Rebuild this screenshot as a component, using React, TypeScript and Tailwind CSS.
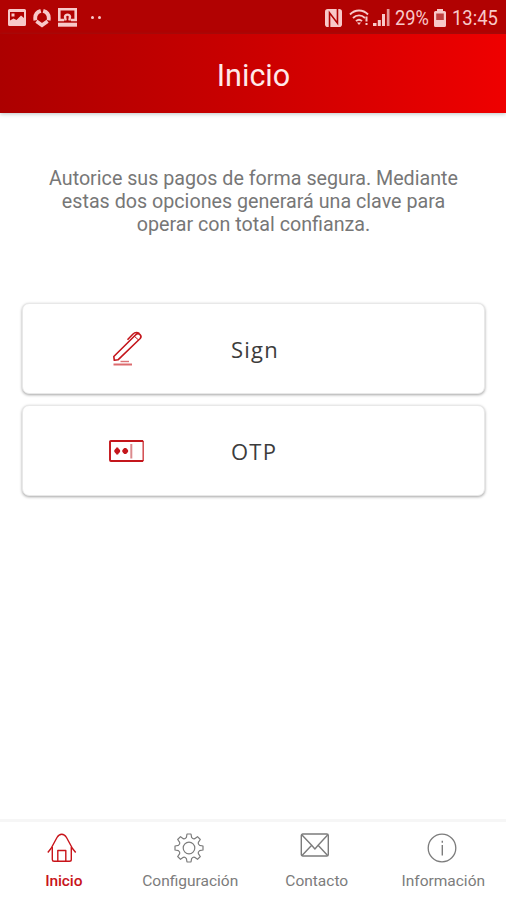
import React from 'react';
import clsx from 'clsx';

interface IconProps {
  className?: string;
}

const PictureIcon: React.FC<IconProps> = ({ className }) => (
  <svg viewBox="0 0 18 17" className={className} fill="currentColor">
    <path
      fillRule="evenodd"
      d="M1.500 0h15A1.500 1.500 0 0 1 18 1.500v14a1.500 1.500 0 0 1-1.500 1.500h-15A1.500 1.500 0 0 1 0 15.500v-14A1.500 1.500 0 0 1 1.500 0ZM2 3V11.500l3.500-2 3 1.500 4.500-4.500 3 2.500V3ZM3.500 4.500h3v3h-3Z"
    />
  </svg>
);

const RingIcon: React.FC<IconProps> = ({ className }) => (
  <svg viewBox="0 0 18 20" className={className} fill="none" stroke="currentColor" strokeWidth="3.800">
    <path d="M7.800 2.800C3.500 4 1.600 7.500 2.400 12.400" />
    <path d="M10.200 2.800c4.300 1.200 6.200 4.700 5.400 9.600" />
    <path d="M3.400 13.300 9 17.200l5.600-3.900" />
  </svg>
);

const BackupIcon: React.FC<IconProps> = ({ className }) => (
  <svg viewBox="0 0 19 19" className={className} fill="none" stroke="currentColor">
    <path d="M1.300 13V1.300h16.400V13" strokeWidth="2.600" />
    <path d="M0 12h6M13 12h6" strokeWidth="2.600" />
    <path d="M7.600 12.500 7 8.500a2.600 2.600 0 0 1 5 0l-.6 4" strokeWidth="2.400" />
    <path d="M0 16.700h19" strokeWidth="4" />
  </svg>
);

const NfcIcon: React.FC<IconProps> = ({ className }) => (
  <svg viewBox="0 0 18 19" className={className}>
    <rect width="18" height="19" rx="3" fill="currentColor" />
    <path d="M4.800 19V4l8.400 11V0" fill="none" stroke="#b00202" strokeWidth="1.700" />
  </svg>
);

const WifiIcon: React.FC<IconProps> = ({ className }) => (
  <svg viewBox="0 0 20 17" className={className} fill="none" stroke="currentColor" strokeWidth="1.900">
    <path d="M1 5.500C6 .2 14 .2 19 5.500" />
    <path d="M4 9c3.500-3.500 8.500-3.500 12 0" />
    <path d="M7 12.200c2-2 4-2 6 0" />
    <path d="m8 13.500 2 2.500 2-2.500Z" fill="currentColor" stroke="none" />
    <path d="M17.500 7.500v5M17.500 14v2" strokeWidth="2" />
  </svg>
);

const SignalIcon: React.FC<IconProps> = ({ className }) => (
  <svg viewBox="0 0 17 17" className={className} fill="currentColor">
    <path d="M0 17v-3h3.500v3ZM4.800 17v-6h3v6ZM9 17V5h3v12Z" />
    <path d="M13.800 17V0H16.500v17Z" opacity=".75" />
  </svg>
);

const BatteryIcon: React.FC<IconProps> = ({ className }) => (
  <svg viewBox="0 0 12 18" className={className}>
    <path
      d="M3 0h6v2h1.500A1.500 1.500 0 0 1 12 3.500v13a1.500 1.500 0 0 1-1.500 1.500h-9A1.500 1.500 0 0 1 0 16.500v-13A1.500 1.500 0 0 1 1.500 2H3Z"
      fill="currentColor"
    />
    <path d="M2.200 4.500h7.600v6.500H2.200Z" fill="#c04040" />
  </svg>
);

const PenIcon: React.FC<IconProps> = ({ className }) => (
  <svg viewBox="0 0 32 36" className={className} fill="none" stroke="#c4161c" strokeWidth="1.600" strokeLinejoin="round">
    <path d="M2.300 29.300 1.800 25.500 24 3.500c2.800-2.200 6.500 1.200 4.200 4L6 28.800Z" />
    <path d="m22.300 5.200 4.500 4" strokeWidth="1" />
    <path d="m15.500 8.800 5.300-5.600c1.500-1.500 4-2.300 6.500-.8" />
    <path d="M8.500 30.500H17" strokeWidth="1.400" stroke="#dc7276" />
    <path d="M1.500 33.500h18.500" strokeWidth="2" stroke="#dc6b6e" />
  </svg>
);

const OtpIcon: React.FC<IconProps> = ({ className }) => (
  <svg viewBox="0 0 36 22" className={className} fill="none" stroke="#c4161c">
    <path d="M34.200 1v20" stroke="#d24a4e" strokeWidth="1.500" />
    <path d="M34.200 1H1.900Q1 1 1 1.900v18.200q0 .9.900.9h32.300" strokeWidth="1.900" />
    <path
      d="M8.200 7.500v7M5.300 11h5.800M6.300 9l3.800 4M10.100 9l-3.800 4M16.200 8v6M13.300 11h5.800M14.300 9l3.800 4M18.100 9l-3.800 4"
      strokeWidth="2"
    />
    <path d="M22.300 4v14.500" stroke="#dc8b8e" strokeWidth="2" />
  </svg>
);

const HomeIcon: React.FC<IconProps> = ({ className }) => (
  <svg viewBox="0 0 30 30" className={className} fill="none" stroke="currentColor" strokeWidth="1.400" strokeLinejoin="round">
    <path d="M.8 19.500 4 15.500 10 4.500C12.500.2 17 .2 19.500 4.500l6 11 3.200 4" />
    <path d="M5.300 14v12.500c0 1.200.5 1.800 1.700 1.800h15.500c1.200 0 1.800-.6 1.800-1.800V14" />
    <path d="M10.800 28.300V17.500h8v10.800" />
  </svg>
);

const GearIcon: React.FC<IconProps> = ({ className }) => (
  <svg viewBox="-15 -15 30 30" className={className} fill="none" stroke="currentColor" strokeWidth="1.200" strokeLinejoin="round">
    <path d="M-2-14H2L2.600-10.600Q4.100-8.700 5.660-9.330L8.490-11.310 11.310-8.490 9.330-5.660Q8.700-4.100 10.600-2.600L14-2V2L10.600 2.600Q8.700 4.100 9.330 5.660L11.310 8.490 8.490 11.310 5.660 9.330Q4.100 8.700 2.600 10.600L2 14H-2L-2.600 10.600Q-4.100 8.700-5.660 9.330L-8.490 11.310-11.310 8.490-9.330 5.660Q-8.700 4.100-10.600 2.600L-14 2V-2L-10.600-2.600Q-8.700-4.100-9.330-5.660L-11.310-8.490-8.490-11.310-5.660-9.330Q-4.100-8.700-2.600-10.600Z" />
    <circle r="5.800" />
  </svg>
);

const MailIcon: React.FC<IconProps> = ({ className }) => (
  <svg viewBox="0 0 30 30" className={className} fill="none" stroke="currentColor" strokeWidth="1.400" strokeLinejoin="round">
    <rect x="1.300" y="1" width="27" height="22" rx="1.500" />
    <path d="m2 2 9.700 10.300 3.200 3.700 3.200-3.700L27.600 2M2 22.500l9.700-10.200M27.600 22.500 18.100 12.300" />
  </svg>
);

const InfoIcon: React.FC<IconProps> = ({ className }) => (
  <svg viewBox="0 0 30 30" className={className} fill="none" stroke="currentColor" strokeWidth="1.300">
    <circle cx="15" cy="15" r="13.800" />
    <path d="M15.300 12v10.500M15.300 7.800v2" strokeWidth="1.400" />
  </svg>
);

const options = [
  { label: 'Sign', icon: PenIcon, iconClass: 'w-8 h-9 ml-[89px]', labelClass: 'ml-[87px]' },
  { label: 'OTP', icon: OtpIcon, iconClass: 'w-9 h-[22px] ml-[86px]', labelClass: 'ml-[86px]' },
];

const tabs = [
  { label: 'Inicio', icon: HomeIcon, iconClass: 'mr-[4px]', active: true },
  { label: 'Configuración', icon: GearIcon, iconClass: 'mr-[3px]', active: false },
  { label: 'Contacto', icon: MailIcon, iconClass: 'mr-[3px]', active: false },
  { label: 'Información', icon: InfoIcon, iconClass: 'mr-[3px]', active: false },
];

const StatusBar: React.FC = () => (
  <div className="flex h-[34px] items-center bg-[#b10202] px-2 pt-px text-[#f8c9c9]">
    <PictureIcon className="h-[17px] w-[18px]" />
    <RingIcon className="ml-[7px] h-5 w-[18px]" />
    <BackupIcon className="ml-[7px] h-[19px] w-[19px]" />
    <div className="ml-[14px] flex gap-[4px]">
      <span className="h-[3px] w-[3px] rounded-full bg-current" />
      <span className="h-[3px] w-[3px] rounded-full bg-current" />
    </div>
    <NfcIcon className="ml-auto h-[18px] w-[17px]" />
    <WifiIcon className="ml-[7px] h-[17px] w-5" />
    <SignalIcon className="ml-[4px] h-[17px] w-[17px]" />
    <span className="ml-[5px] w-[34px] pt-px text-[20.500px] leading-none whitespace-nowrap">
      <span className="inline-block origin-left scale-x-[.89]">29%</span>
    </span>
    <BatteryIcon className="ml-[5px] h-[18px] w-3" />
    <span className="ml-[6px] w-[46px] pt-px text-[20.500px] leading-none whitespace-nowrap">
      <span className="inline-block origin-left scale-x-[.9]">13:45</span>
    </span>
  </div>
);

export default function App() {
  return (
    <div className="flex h-[900px] w-[506px] flex-col overflow-hidden bg-white font-['Roboto',sans-serif]">
      <StatusBar />
      <header className="flex h-[79px] shrink-0 items-center justify-center bg-linear-to-r from-[#ac0000] via-[#cb0000] to-[#ef0000] pt-[4px] pl-px text-[30.500px] text-[#ffe9e9] shadow-[0_1px_4px_rgba(60,90,90,0.35)]">
        Inicio
      </header>

      <main className="flex flex-1 flex-col pr-[21px] pl-[22px]">
        <p className="mt-[54px] text-center text-[19.700px] leading-[23px] whitespace-nowrap text-[#777]">
          Autorice sus pagos de forma segura. Mediante
          <br />
          estas dos opciones generará una clave para
          <br />
          operar con total confianza.
        </p>
        <div className="mt-[67px] flex flex-col gap-[11px]">
          {options.map(({ label, icon: Icon, iconClass, labelClass }) => (
            <button
              key={label}
              className="flex h-[91px] items-center rounded-[7px] border border-[#e8e8e8] bg-white pt-px shadow-[0_1px_3px_rgba(0,0,0,0.36)]"
            >
              <Icon className={iconClass} />
              <span
                className={clsx(
                  "font-['Open_Sans',sans-serif] text-[22px] tracking-[1.200px] text-[#3c3c3c]",
                  labelClass,
                )}
              >
                {label}
              </span>
            </button>
          ))}
        </div>
      </main>

      <nav className="grid h-[81px] shrink-0 grid-cols-4 border-t-[3px] border-[#f6f6f6]">
        {tabs.map(({ label, icon: Icon, iconClass, active }) => (
          <div
            key={label}
            className={clsx(
              'flex flex-col items-center pt-[11px] pl-px',
              active ? 'text-[#c8141a]' : 'text-[#7c7c7c]',
            )}
          >
            <Icon className={clsx('h-[30px] w-[30px]', iconClass)} />
            <span
              className={clsx(
                'mt-[8px] text-[15.500px] leading-[20px]',
                active && 'font-medium tracking-[-0.1px]',
              )}
            >
              {label}
            </span>
          </div>
        ))}
      </nav>
    </div>
  );
}
